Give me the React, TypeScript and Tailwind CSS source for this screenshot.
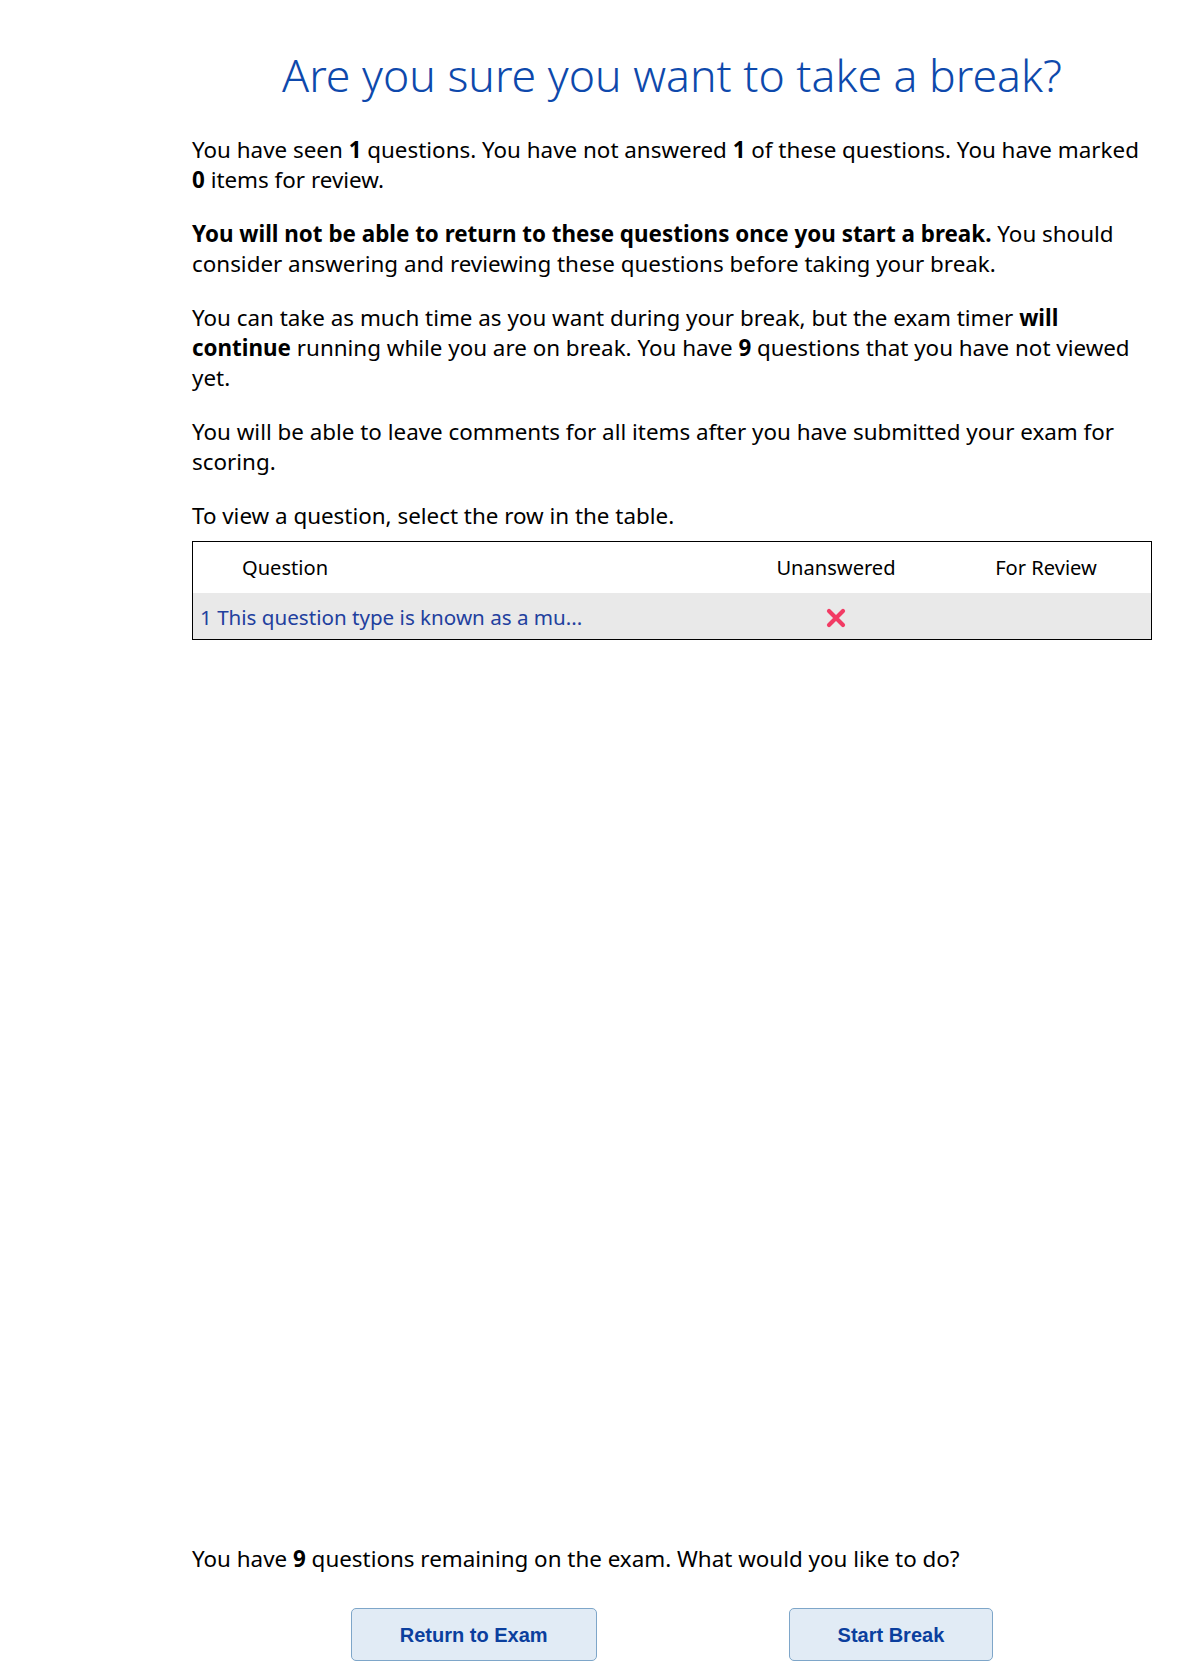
function CrossIcon() {
  return (
    <svg width="24" height="24" viewBox="0 0 24 24" aria-hidden="true">
      <path d="M5 5 L19 19 M19 5 L5 19" stroke="#f23b64" strokeWidth="4.2" strokeLinecap="round" fill="none" />
    </svg>
  )
}

export default function App() {
  return (
    <div className="relative flex min-h-screen w-full flex-col bg-white font-['Noto_Sans',sans-serif] text-black">
      <main className="ml-[192px] w-[960px]">
        <h1 className="mt-[43px] text-center text-[44.6px] leading-[64px] font-light text-[#0e49ac]">
          Are you sure you want to take a break?
        </h1>

        <div className="mt-[28px] flex flex-col gap-[24px] text-[22.4px] leading-[30px]">
          <p>
            You have seen <b>1</b> questions. You have not answered <b>1</b> of these questions. You have marked{' '}
            <b>0</b> items for review.
          </p>
          <p>
            <b>You will not be able to return to these questions once you start a break.</b> You should consider
            answering and reviewing these questions before taking your break.
          </p>
          <p>
            You can take as much time as you want during your break, but the exam timer <b>will continue</b> running
            while you are on break. You have <b>9</b> questions that you have not viewed yet.
          </p>
          <p>You will be able to leave comments for all items after you have submitted your exam for scoring.</p>
          <p>To view a question, select the row in the table.</p>
        </div>

        <div className="mt-[10px] border border-black">
          <div className="flex h-[51px] items-center pt-[2px] text-[20.1px]">
            <div className="flex-1 pl-[49px]">Question</div>
            <div className="w-[210px] text-center">Unanswered</div>
            <div className="w-[210px] text-center">For Review</div>
          </div>
          <div className="flex h-[46px] cursor-pointer items-center bg-[#e9e9e9] pt-[3px] text-[20.6px]">
            <div className="flex-1 pl-[7px] text-[#22409e]">1 This question type is known as a mu...</div>
            <div className="flex w-[210px] justify-center">
              <CrossIcon />
            </div>
            <div className="w-[210px]" />
          </div>
        </div>
      </main>

      <footer className="mt-auto ml-[192px] w-[960px] pb-[13px]">
        <p className="text-[22.4px] leading-[30px]">
          You have <b>9</b> questions remaining on the exam. What would you like to do?
        </p>
        <div className="mt-[34px] flex justify-center gap-[192px] font-['Liberation_Sans',Arial,sans-serif]">
          <button className="h-[53px] rounded-[5px] border border-[#7ea6c9] bg-[#e1ebf5] px-[48px] text-[20px] font-bold text-[#0b3f9e]">
            Return to Exam
          </button>
          <button className="h-[53px] rounded-[5px] border border-[#7ea6c9] bg-[#e1ebf5] px-[48px] text-[20px] font-bold text-[#0b3f9e]">
            Start Break
          </button>
        </div>
      </footer>
    </div>
  )
}
